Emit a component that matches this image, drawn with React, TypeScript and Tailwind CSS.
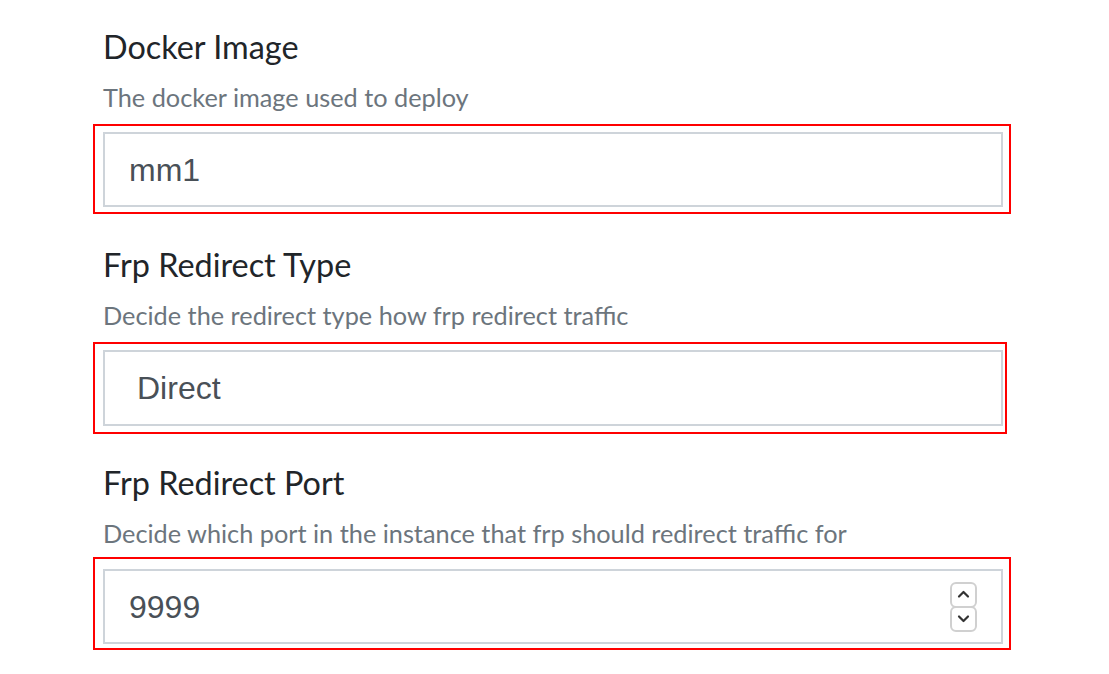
import React from 'react';

const lato = { fontFamily: 'Lato, "Open Sans", sans-serif' };
const arial = { fontFamily: '"Liberation Sans", Arial, sans-serif' };

const Label: React.FC<{ title: string; hint: string; hintGap: string }> = ({ title, hint, hintGap }) => (
  <div className="pl-[10px] pt-[1px]" style={lato}>
    <h3 className="text-[32.4px] leading-[40px] font-normal text-[#212529]">{title}</h3>
    <p className={`text-[25.3px] leading-[32px] text-[#6c757d] mt-[14px] ${hintGap}`}>{hint}</p>
  </div>
);

const Spinner: React.FC = () => (
  <div className="flex flex-col">
    <div className="w-[27px] h-[26px] rounded-[6px] border-2 border-[#d0d0d0] bg-white flex items-center justify-center">
      <svg width="13" height="9" viewBox="0 0 13 9" fill="none" stroke="#333" strokeWidth="2.2" strokeLinecap="round" strokeLinejoin="round">
        <path d="M2 6.5l4.5-4.5 4.5 4.5" />
      </svg>
    </div>
    <div className="w-[27px] h-[26px] rounded-[6px] border-2 border-[#d0d0d0] bg-white flex items-center justify-center -mt-[2px]">
      <svg width="13" height="9" viewBox="0 0 13 9" fill="none" stroke="#333" strokeWidth="2.2" strokeLinecap="round" strokeLinejoin="round">
        <path d="M2 2.5l4.5 4.5 4.5-4.5" />
      </svg>
    </div>
  </div>
);

export default function App() {
  return (
    <div className="min-h-screen bg-white pt-[26px] pl-[93px]">
      {/* Docker image */}
      <Label title="Docker Image" hint="The docker image used to deploy" hintGap="mb-[11px]" />
      <div className="w-[918px] h-[90px] border-2 border-[#ff0000] pl-[8px] pt-[6px] pr-[6px]">
        <div className="h-[75px] border-2 border-[#ced4da] flex items-center pl-[24px] text-[32px] text-[#495057]" style={arial}>
          mm1
        </div>
      </div>

      {/* Redirect type */}
      <div className="mt-[30px]">
        <Label title="Frp Redirect Type" hint="Decide the redirect type how frp redirect traffic" hintGap="mb-[11px]" />
        <div className="w-[914px] h-[92px] border-2 border-[#ff0000] pl-[8px] pt-[6px] pr-[2px]">
          <div className="h-[76px] border-2 border-[#ced4da] flex items-center pl-[32px] text-[32px] text-[#495057]" style={arial}>
            Direct
          </div>
        </div>
      </div>

      {/* Redirect port */}
      <div className="mt-[28px]">
        <Label title="Frp Redirect Port" hint="Decide which port in the instance that frp should redirect traffic for" hintGap="mb-[8px]" />
        <div className="w-[918px] h-[93px] border-2 border-[#ff0000] pl-[8px] pt-[10px] pr-[6px]">
          <div className="h-[75px] border-2 border-[#ced4da] flex items-center justify-between pl-[24px] pr-[24px] text-[32px] text-[#495057]" style={arial}>
            <span>9999</span>
            <Spinner />
          </div>
        </div>
      </div>
    </div>
  );
}
